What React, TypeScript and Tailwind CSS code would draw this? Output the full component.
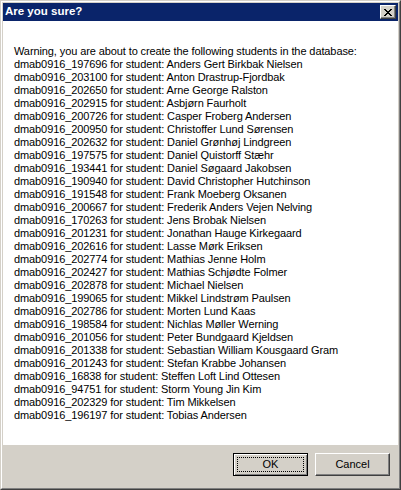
const students: [string, string][] = [
  ['dmab0916_197696', 'Anders Gert Birkbak Nielsen'],
  ['dmab0916_203100', 'Anton Drastrup-Fjordbak'],
  ['dmab0916_202650', 'Arne George Ralston'],
  ['dmab0916_202915', 'Asbjørn Faurholt'],
  ['dmab0916_200726', 'Casper Froberg Andersen'],
  ['dmab0916_200950', 'Christoffer Lund Sørensen'],
  ['dmab0916_202632', 'Daniel Grønhøj Lindgreen'],
  ['dmab0916_197575', 'Daniel Quistorff Stæhr'],
  ['dmab0916_193441', 'Daniel Søgaard Jakobsen'],
  ['dmab0916_190940', 'David Christopher Hutchinson'],
  ['dmab0916_191548', 'Frank Moeberg Oksanen'],
  ['dmab0916_200667', 'Frederik Anders Vejen Nelving'],
  ['dmab0916_170263', 'Jens Brobak Nielsen'],
  ['dmab0916_201231', 'Jonathan Hauge Kirkegaard'],
  ['dmab0916_202616', 'Lasse Mørk Eriksen'],
  ['dmab0916_202774', 'Mathias Jenne Holm'],
  ['dmab0916_202427', 'Mathias Schjødte Folmer'],
  ['dmab0916_202878', 'Michael Nielsen'],
  ['dmab0916_199065', 'Mikkel Lindstrøm Paulsen'],
  ['dmab0916_202786', 'Morten Lund Kaas'],
  ['dmab0916_198584', 'Nichlas Møller Werning'],
  ['dmab0916_201056', 'Peter Bundgaard Kjeldsen'],
  ['dmab0916_201338', 'Sebastian William Kousgaard Gram'],
  ['dmab0916_201243', 'Stefan Krabbe Johansen'],
  ['dmab0916_16838', 'Steffen Loft Lind Ottesen'],
  ['dmab0916_94751', 'Storm Young Jin Kim'],
  ['dmab0916_202329', 'Tim Mikkelsen'],
  ['dmab0916_196197', 'Tobias Andersen'],
];

// classic 8x7 close glyph
const xPixels = [
  '11....11',
  '.11..11.',
  '..1111..',
  '...11...',
  '..1111..',
  '.11..11.',
  '11....11',
];

function CloseGlyph() {
  return (
    <svg width="8" height="7" viewBox="0 0 8 7" shapeRendering="crispEdges">
      {xPixels.map((row, y) =>
        row.split('').map((c, x) =>
          c === '1' ? <rect key={`${x}-${y}`} x={x} y={y} width="1" height="1" fill="#000" /> : null
        )
      )}
    </svg>
  );
}

export default function App() {
  return (
    <div className="w-[401px] h-[490px] border border-t-[#d4d0c8] border-l-[#d4d0c8] border-r-[#404040] border-b-[#404040] font-['Liberation_Sans',Arial,sans-serif] text-[11px] text-black">
      <div className="h-full border border-t-white border-l-white border-r-[#808080] border-b-[#808080] bg-[#d4d0c8] p-px flex flex-col">
        {/* Title bar */}
        <div className="h-[18px] bg-[#0a246a] flex items-center justify-between pl-[2px] pr-[2px]">
          <span className="text-white font-bold text-[11.5px] leading-none">Are you sure?</span>
          <div className="w-[16px] h-[14px] flex items-center justify-center border border-t-white border-l-white border-r-[#404040] border-b-[#404040] bg-[#d4d0c8] shadow-[inset_-1px_-1px_#808080]">
            <CloseGlyph />
          </div>
        </div>

        {/* Message */}
        <div className="h-[424px] bg-white pt-[24px] pl-[11px] leading-[13px] tracking-[-0.1px] whitespace-nowrap">
          <div>Warning, you are about to create the following students in the database:</div>
          {students.map(([id, name]) => (
            <div key={id}>
              {id} for student: {name}
            </div>
          ))}
        </div>

        {/* Buttons */}
        <div className="flex-1 flex justify-end items-start gap-[7px] pt-[8px] pr-[8px]">
          <button className="relative w-[75px] h-[23px] border border-black bg-[#d4d0c8] shadow-[inset_1px_1px_white,inset_-1px_-1px_#808080] text-[11px]">
            <span className="absolute inset-[3px] border border-dotted border-black" />
            OK
          </button>
          <button className="w-[75px] h-[23px] border border-t-white border-l-white border-r-[#404040] border-b-[#404040] bg-[#d4d0c8] shadow-[inset_-1px_-1px_#808080] text-[11px]">
            Cancel
          </button>
        </div>
      </div>
    </div>
  );
}
